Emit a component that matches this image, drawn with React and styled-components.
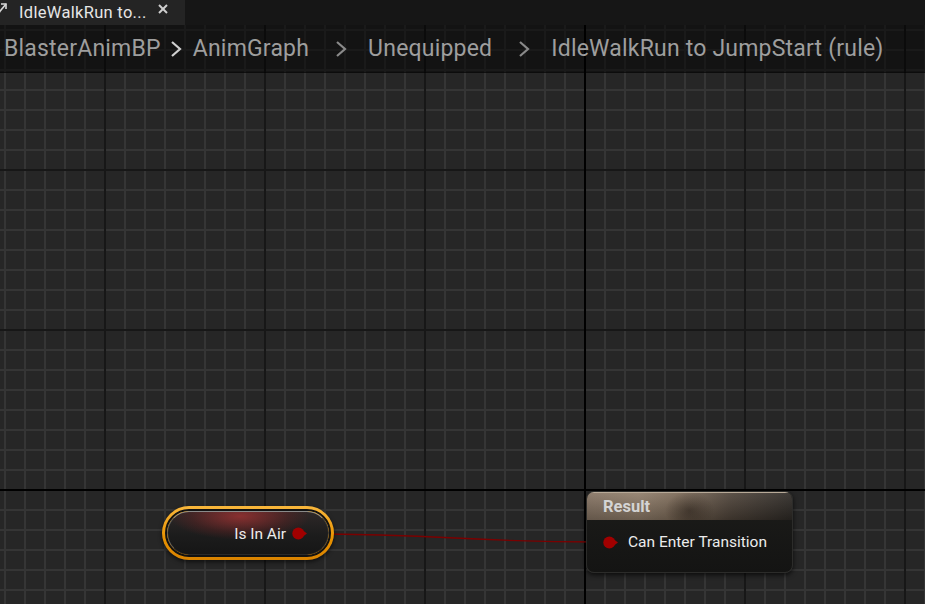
import React from 'react';
import styled, { createGlobalStyle } from 'styled-components';

const GlobalStyle = createGlobalStyle`
  html, body {
    margin: 0;
    padding: 0;
    background: #161616;
    overflow: hidden;
  }
  body {
    font-family: Roboto, "Noto Sans", "Liberation Sans", sans-serif;
  }
`;

const Window = styled.div`
  display: flex;
  flex-direction: column;
  width: 925px;
  height: 604px;
`;

const TabBar = styled.div`
  display: flex;
  height: 25px;
  background: #161616;
  flex-shrink: 0;
`;

const Tab = styled.div`
  position: relative;
  display: flex;
  align-items: center;
  width: 185px;
  height: 25px;
  background: #242424;
  padding-left: 19px;
  box-sizing: border-box;
  color: #e6e6e6;
  font-size: 16.5px;
  letter-spacing: 0.3px;
`;

const TabIcon = styled.svg`
  position: absolute;
  left: -4px;
  top: 2px;
`;

const CloseButton = styled.svg`
  position: absolute;
  left: 158px;
  top: 4px;
`;

const Canvas = styled.div`
  position: relative;
  flex: 1;
  overflow: hidden;
  background-color: #262626;
  background-image:
    linear-gradient(to right, transparent 584px, #000 584px, #000 586px, transparent 586px),
    linear-gradient(to bottom, transparent 464px, #000 464px, #000 466px, transparent 466px),
    linear-gradient(to right, #171717 0, #171717 2px, transparent 2px),
    linear-gradient(to bottom, #171717 0, #171717 2px, transparent 2px),
    linear-gradient(to right, #353535 0, #353535 2px, transparent 2px),
    linear-gradient(to bottom, #353535 0, #353535 2px, transparent 2px);
  background-size:
    100% 100%,
    100% 100%,
    160px 100%,
    100% 160px,
    20px 100%,
    100% 20px;
  background-position:
    0 0,
    0 0,
    104px 0,
    0 144px,
    4px 0,
    0 4px;
  background-repeat: no-repeat, no-repeat, repeat, repeat, repeat, repeat;
`;

const Breadcrumbs = styled.div`
  position: absolute;
  top: 0;
  left: 0;
  right: 0;
  height: 47px;
  display: flex;
  align-items: center;
  padding-left: 4px;
  background: rgba(0, 0, 0, 0.5);
  border-bottom: 1px solid rgba(0, 0, 0, 0.35);
  z-index: 3;
`;

const Crumb = styled.span`
  color: #9e9e9e;
  font-size: 23px;
  letter-spacing: 0.2px;
  line-height: 1;
  white-space: nowrap;
  padding-bottom: 1px;
`;

const Chevron = styled.svg`
  flex-shrink: 0;
  margin: ${({ $first }) => ($first ? '1px 11px 0 9px' : '1px 21px 0 26px')};
`;

const Wires = styled.svg`
  position: absolute;
  left: 0;
  top: 0;
  z-index: 1;
  pointer-events: none;
`;

const VarNode = styled.div`
  position: absolute;
  left: ${({ $x }) => $x}px;
  top: ${({ $y }) => $y}px;
  width: 172px;
  height: 54px;
  box-sizing: border-box;
  padding: 3px;
  border-radius: 27px;
  background: linear-gradient(to bottom, #f9b73c, #e99200 60%, #d98300);
  box-shadow: 0 2px 4px rgba(0, 0, 0, 0.6);
  z-index: 2;
`;

const VarBody = styled.div`
  height: 100%;
  box-sizing: border-box;
  border-radius: 24px;
  border: 2px solid #121212;
  overflow: hidden;
`;

const VarInner = styled.div`
  display: flex;
  align-items: center;
  justify-content: flex-end;
  height: 100%;
  box-sizing: border-box;
  padding-right: 21px;
  padding-top: 1px;
  gap: 6px;
  border-radius: 22px;
  border-top: 1px solid #8a8a8a;
  border-left: 1px solid #5a5a5a;
  border-right: 1px solid #3a3a3a;
  border-bottom: 1px solid #2a2a2a;
  background:
    radial-gradient(ellipse 55% 70% at 45% 10%, rgba(160, 50, 50, 0.8), rgba(120, 35, 35, 0.3) 55%, transparent 80%),
    linear-gradient(to bottom, #2e2828, #1c1c1c 55%, #161616);
`;

const PinLabel = styled.span`
  color: #ececec;
  font-size: 15.5px;
  white-space: nowrap;
`;

const ResultNode = styled.div`
  position: absolute;
  left: ${({ $x }) => $x}px;
  top: ${({ $y }) => $y}px;
  width: 207px;
  height: 82px;
  box-sizing: border-box;
  border-radius: 8px;
  border: 1px solid #2c2c2a;
  background: linear-gradient(to bottom, #1c1c1a, #141413);
  box-shadow: 0 2px 5px rgba(0, 0, 0, 0.7);
  overflow: hidden;
  z-index: 2;
`;

const NodeHeader = styled.div`
  height: 27px;
  display: flex;
  align-items: center;
  padding-left: 16px;
  color: #d4d4d4;
  font-size: 16.5px;
  font-weight: 700;
  border-top: 1px solid #b8aa98;
  background:
    linear-gradient(to bottom, rgba(255, 255, 255, 0.08), rgba(0, 0, 0, 0.25)),
    radial-gradient(ellipse 12% 70% at 50% 65%, rgba(40, 30, 22, 0.55), transparent 100%),
    linear-gradient(to right, #857362 0%, #8f7d6a 25%, #7a6856 45%, #4e4339 70%, #2e2a26 100%);
`;

const NodeRow = styled.div`
  display: flex;
  align-items: center;
  gap: 10px;
  height: 44px;
  padding-left: 16px;
`;

const Pin = ({ color = '#a10000' }) => (
  <svg width="15" height="13" viewBox="0 0 15 13">
    <circle cx="6.3" cy="6.5" r="6" fill={color} />
    <polygon points="11,3.5 15,6.5 11,9.5" fill={color} />
  </svg>
);

const ChevronIcon = ({ first }) => (
  <Chevron $first={first} width="12" height="18" viewBox="0 0 12 18">
    <polyline
      points="2,2 10,9 2,16"
      fill="none"
      stroke={first ? '#d0d0d0' : '#8a8a8a'}
      strokeWidth="2.2"
    />
  </Chevron>
);

const crumbs = ['BlasterAnimBP', 'AnimGraph', 'Unequipped', 'IdleWalkRun to JumpStart (rule)'];

export default function App() {
  return (
    <Window>
      <GlobalStyle />
      <TabBar>
        <Tab>
          <TabIcon width="12" height="14" viewBox="0 0 12 14">
            <line x1="1" y1="13" x2="10" y2="2" stroke="#d8d8d8" strokeWidth="1.6" />
            <polyline points="5,2 10,2 10,7" fill="none" stroke="#d8d8d8" strokeWidth="1.6" />
          </TabIcon>
          IdleWalkRun to...
          <CloseButton width="10" height="10" viewBox="0 0 10 10">
            <line x1="1" y1="1" x2="9" y2="9" stroke="#cfcfcf" strokeWidth="2" />
            <line x1="9" y1="1" x2="1" y2="9" stroke="#cfcfcf" strokeWidth="2" />
          </CloseButton>
        </Tab>
      </TabBar>
      <Canvas>
        <Breadcrumbs>
          {crumbs.map((c, i) => (
            <React.Fragment key={c}>
              {i > 0 && <ChevronIcon first={i === 1} />}
              <Crumb>{c}</Crumb>
            </React.Fragment>
          ))}
        </Breadcrumbs>
        <Wires width="925" height="579">
          <path
            d="M307 509 C 450 509, 460 517, 600 517"
            fill="none"
            stroke="#7a0000"
            strokeWidth="1.4"
          />
        </Wires>
        <VarNode $x={162} $y={481}>
          <VarBody>
            <VarInner>
              <PinLabel>Is In Air</PinLabel>
              <Pin />
            </VarInner>
          </VarBody>
        </VarNode>
        <ResultNode $x={586} $y={466}>
          <NodeHeader>Result</NodeHeader>
          <NodeRow>
            <Pin />
            <PinLabel>Can Enter Transition</PinLabel>
          </NodeRow>
        </ResultNode>
      </Canvas>
    </Window>
  );
}
